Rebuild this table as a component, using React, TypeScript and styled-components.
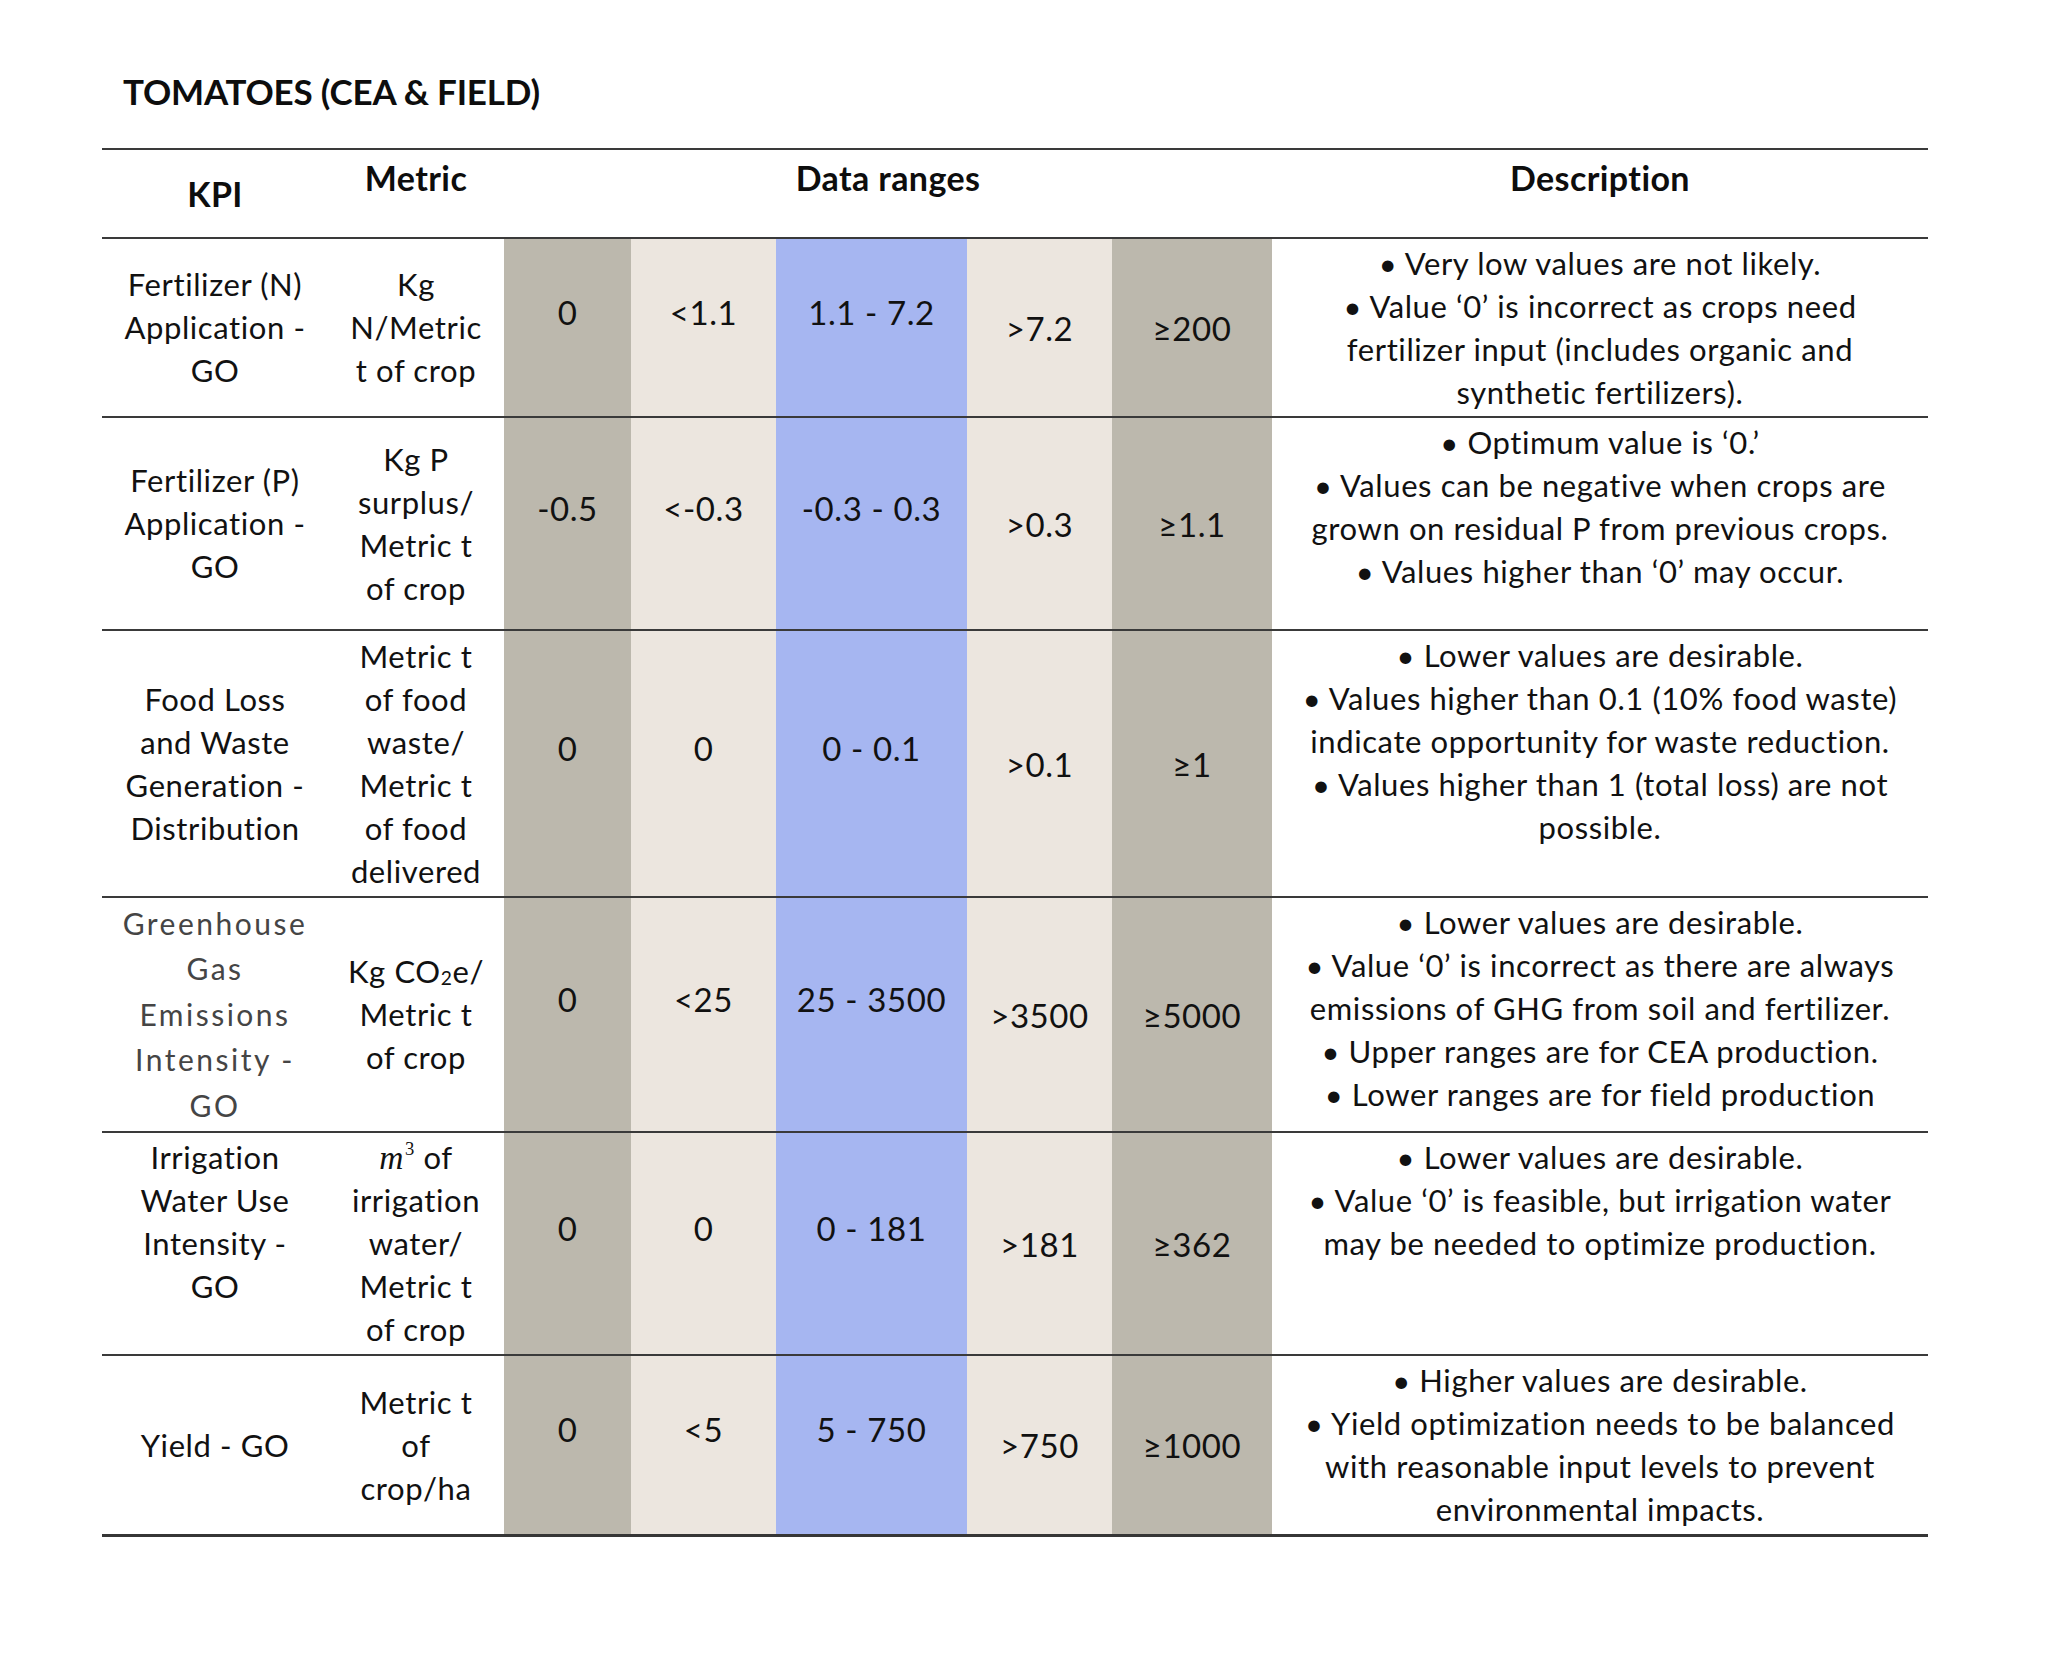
import React from 'react';
import styled, { createGlobalStyle } from 'styled-components';

const GlobalStyle = createGlobalStyle`
  html, body { margin: 0; padding: 0; background: #ffffff; }
  body { font-family: Lato, "Open Sans", "DejaVu Sans", sans-serif; color: #111111; }
`;

const COLS = '226px 176px 127px 145px 191px 145px 160px 656px';

const Page = styled.div`
  width: 2072px;
  min-height: 1668px;
  box-sizing: border-box;
  padding: 70px 0 0 102px;
`;

const Title = styled.h1`
  margin: 0 0 36px 21px;
  font-size: 35px;
  line-height: 42px;
  font-weight: 700;
  color: #0d0d0d;
  letter-spacing: -0.2px;
`;

const Table = styled.div`
  width: 1826px;
  border-bottom: 3px solid #363636;
`;

const Row = styled.div<{ $h: number }>`
  display: grid;
  grid-template-columns: ${COLS};
  height: ${(p) => p.$h}px;
  box-sizing: border-box;
  border-top: 2px solid #3a3a3a;
`;

const HeadCell = styled.div<{ $raised?: boolean; $span?: number }>`
  display: flex;
  align-items: center;
  justify-content: center;
  font-size: 34px;
  letter-spacing: 0.4px;
  font-weight: 700;
  color: #0d0d0d;
  padding-bottom: ${(p) => (p.$raised ? 32 : 0)}px;
  grid-column: span ${(p) => p.$span ?? 1};
`;

const TextCell = styled.div<{ $top?: boolean; $muted?: boolean }>`
  display: flex;
  flex-direction: column;
  align-items: center;
  justify-content: ${(p) => (p.$top ? 'flex-start' : 'center')};
  padding-top: ${(p) => (p.$top ? 3 : 0)}px;
  text-align: center;
  font-size: ${(p) => (p.$muted ? 30 : 31)}px;
  line-height: ${(p) => (p.$muted ? 45.5 : 43)}px;
  letter-spacing: ${(p) => (p.$muted ? '2.5px' : '0.6px')};
  color: ${(p) => (p.$muted ? '#454545' : '#111111')};
`;

const TONES = {
  gray: '#bcb8ad',
  beige: '#ece6df',
  blue: '#a6b6f1',
};

type Tone = keyof typeof TONES;

const DataCell = styled.div<{ $tone: Tone; $raised?: boolean }>`
  display: flex;
  align-items: center;
  justify-content: center;
  background: ${(p) => TONES[p.$tone]};
  font-size: 33px;
  letter-spacing: 0.6px;
  color: #111111;
  white-space: nowrap;
  padding-bottom: ${(p) => (p.$raised ? 32 : 0)}px;
`;

const Line = styled.span`
  display: block;
  white-space: nowrap;
`;

const MathVar = styled.span`
  font-family: "Liberation Serif", "DejaVu Serif", serif;
  font-style: italic;
  font-size: 1.08em;
  line-height: 0;
`;

const Sup = styled.sup`
  font-family: "Liberation Serif", "DejaVu Serif", serif;
  font-size: 0.6em;
  vertical-align: 0.75em;
  line-height: 0;
  margin-left: 1px;
`;

const Sub = styled.span`
  font-size: 0.62em;
  vertical-align: -0.12em;
  line-height: 0;
`;

const Lines: React.FC<{ items: React.ReactNode[] }> = ({ items }) => (
  <>
    {items.map((t, i) => (
      <Line key={i}>{t}</Line>
    ))}
  </>
);

type RowData = {
  h: number;
  kpi: React.ReactNode[];
  kpiTop?: boolean;
  kpiMuted?: boolean;
  metric: React.ReactNode[];
  data: string[];
  desc: string[];
};

const ROWS: RowData[] = [
  {
    h: 179,
    kpi: ['Fertilizer (N)', 'Application -', 'GO'],
    metric: ['Kg', 'N/Metric', 't of crop'],
    data: ['0', '<1.1', '1.1 - 7.2', '>7.2', '≥200'],
    desc: [
      '• Very low values are not likely.',
      '• Value ‘0’ is incorrect as crops need',
      'fertilizer input (includes organic and',
      'synthetic fertilizers).',
    ],
  },
  {
    h: 213,
    kpi: ['Fertilizer (P)', 'Application -', 'GO'],
    metric: ['Kg P', 'surplus/', 'Metric t', 'of crop'],
    data: ['-0.5', '<-0.3', '-0.3 - 0.3', '>0.3', '≥1.1'],
    desc: [
      '• Optimum value is ‘0.’',
      '• Values can be negative when crops are',
      'grown on residual P from previous crops.',
      '• Values higher than ‘0’ may occur.',
    ],
  },
  {
    h: 267,
    kpi: ['Food Loss', 'and Waste', 'Generation -', 'Distribution'],
    metric: ['Metric t', 'of food', 'waste/', 'Metric t', 'of food', 'delivered'],
    data: ['0', '0', '0 - 0.1', '>0.1', '≥1'],
    desc: [
      '• Lower values are desirable.',
      '• Values higher than 0.1 (10% food waste)',
      'indicate opportunity for waste reduction.',
      '• Values higher than 1 (total loss) are not',
      'possible.',
    ],
  },
  {
    h: 235,
    kpi: ['Greenhouse', 'Gas', 'Emissions', 'Intensity -', 'GO'],
    kpiMuted: true,
    metric: [
      <>
        Kg CO<Sub>2</Sub>e/
      </>,
      'Metric t',
      'of crop',
    ],
    data: ['0', '<25', '25 - 3500', '>3500', '≥5000'],
    desc: [
      '• Lower values are desirable.',
      '• Value ‘0’ is incorrect as there are always',
      'emissions of GHG from soil and fertilizer.',
      '• Upper ranges are for CEA production.',
      '• Lower ranges are for field production',
    ],
  },
  {
    h: 223,
    kpi: ['Irrigation', 'Water Use', 'Intensity -', 'GO'],
    kpiTop: true,
    metric: [
      <>
        <MathVar>m</MathVar>
        <Sup>3</Sup> of
      </>,
      'irrigation',
      'water/',
      'Metric t',
      'of crop',
    ],
    data: ['0', '0', '0 - 181', '>181', '≥362'],
    desc: [
      '• Lower values are desirable.',
      '• Value ‘0’ is feasible, but irrigation water',
      'may be needed to optimize production.',
    ],
  },
  {
    h: 180,
    kpi: ['Yield - GO'],
    metric: ['Metric t', 'of', 'crop/ha'],
    data: ['0', '<5', '5 - 750', '>750', '≥1000'],
    desc: [
      '• Higher values are desirable.',
      '• Yield optimization needs to be balanced',
      'with reasonable input levels to prevent',
      'environmental impacts.',
    ],
  },
];

const DATA_TONES: Tone[] = ['gray', 'beige', 'blue', 'beige', 'gray'];

export default function App() {
  return (
    <Page>
      <GlobalStyle />
      <Title>TOMATOES (CEA &amp; FIELD)</Title>
      <Table>
        <Row $h={89}>
          <HeadCell>KPI</HeadCell>
          <HeadCell $raised>Metric</HeadCell>
          <HeadCell $raised $span={5}>
            Data ranges
          </HeadCell>
          <HeadCell $raised>Description</HeadCell>
        </Row>
        {ROWS.map((r, i) => (
          <Row key={i} $h={r.h}>
            <TextCell $top={r.kpiTop} $muted={r.kpiMuted}>
              <Lines items={r.kpi} />
            </TextCell>
            <TextCell>
              <Lines items={r.metric} />
            </TextCell>
            {r.data.map((d, j) => (
              <DataCell key={j} $tone={DATA_TONES[j]} $raised={j < 3}>
                {d}
              </DataCell>
            ))}
            <TextCell $top>
              <Lines items={r.desc} />
            </TextCell>
          </Row>
        ))}
      </Table>
    </Page>
  );
}
